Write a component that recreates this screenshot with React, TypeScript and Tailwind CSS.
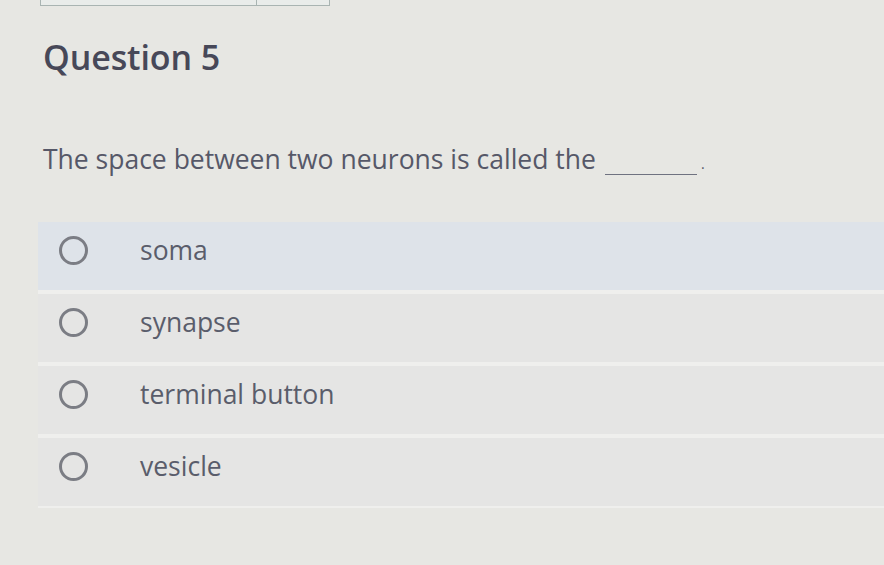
import React from "react";

const options = ["soma", "synapse", "terminal button", "vesicle"];

export default function App() {
  return (
    <div
      className="w-[884px] h-[565px] overflow-hidden bg-[#e7e7e3] flex flex-col"
      style={{ fontFamily: '"Open Sans", "Noto Sans", sans-serif' }}
    >
      {/* tab strip remnant at the top */}
      <div className="ml-[40px] w-[290px] h-[6px] flex border-x border-b border-[#a9b4b2] bg-[#e9ecea]">
        <div className="w-[216px] border-r border-[#a9b4b2]" />
        <div className="flex-1" />
      </div>

      <div className="pl-[43px] pt-[31px]">
        <h2 className="text-[34px] leading-[40px] font-semibold text-[#474858] tracking-[-0.1px]">Question 5</h2>
      </div>

      <p className="pl-[43px] mt-[64px] text-[26.5px] leading-[36px] text-[#565868]">
        The space between two neurons is called the
        <span className="inline-block ml-[9px] w-[92px] h-[1px] bg-[#6f7280] align-[-6px]" />
        <span className="ml-[4px] text-[14px]">.</span>
      </p>

      <div className="ml-[38px] mt-[40px] flex flex-col gap-[4px] bg-[#efefed] pb-[2px]">
        {options.map((opt, i) => (
          <label
            key={opt}
            className={
              "h-[68px] flex items-start pt-[10px] pl-[21px] " +
              (i === 0 ? "bg-[#dee3e9]" : "bg-[#e5e5e4]")
            }
          >
            <span className="mt-[4px] w-[29px] h-[29px] rounded-full border-[3px] border-[#7b7d84] shrink-0" />
            <span className="ml-[52px] text-[26.5px] leading-[36px] text-[#5a5d6b]">{opt}</span>
          </label>
        ))}
      </div>
    </div>
  );
}
